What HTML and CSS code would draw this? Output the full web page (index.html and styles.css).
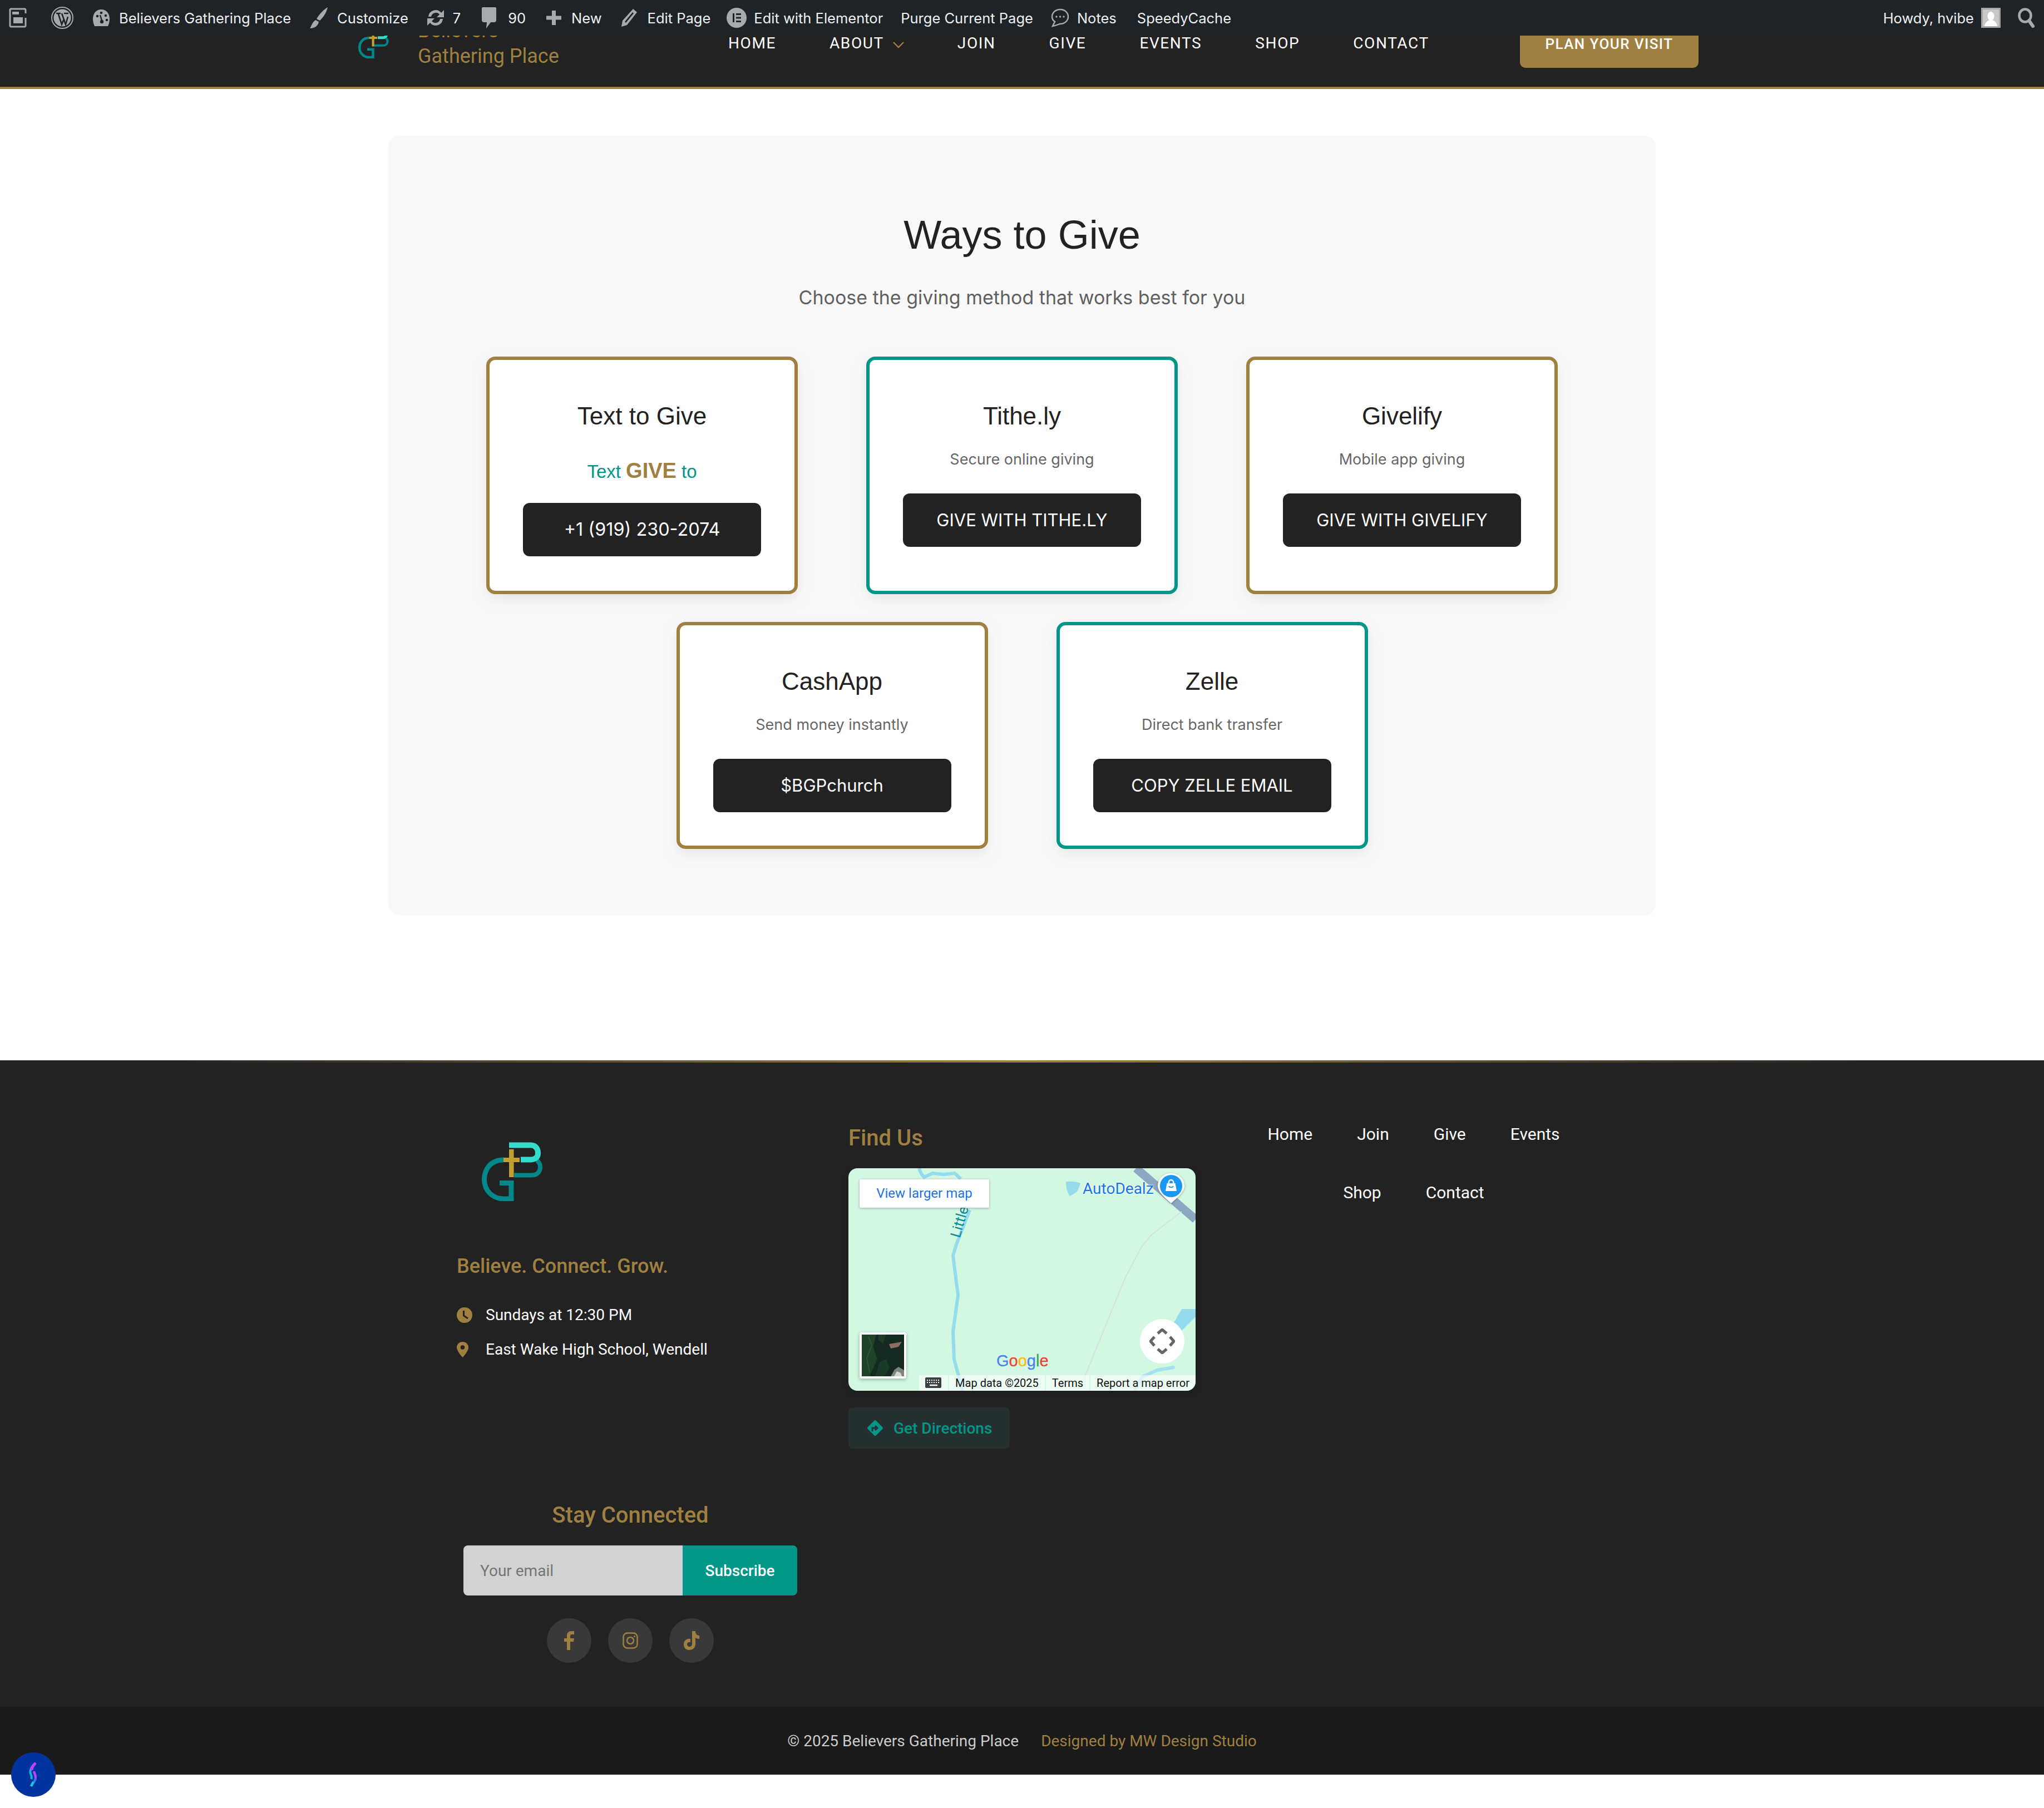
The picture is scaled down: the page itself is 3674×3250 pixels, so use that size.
FILE: index.html
```html
<!DOCTYPE html>
<html lang="en">
<head>
    <meta charset="UTF-8">
    <meta name="viewport" content="width=device-width, initial-scale=1.0">
    <title>Give - Believers Gathering Place</title>
    <link rel="stylesheet" href="styles.css">
</head>
<body>
    <svg class="defs" width="0" height="0">
        <symbol id="bgp-logo" viewBox="0 0 110 106">
            <path d="M39 32C15 32 4.500 50 4.500 67C4.500 88 20 102 40 102H53V73.500H32" fill="none" stroke="#00878a" stroke-width="9"/>
            <path d="M58 59.500H90C102 59.500 105 50 105 45C105 40 103 36 99 33" fill="none" stroke="#00878a" stroke-width="8"/>
            <path d="M49 5.500H88C98 5.500 101 13 101 20C101 27 96 31.500 88 31.500H70" fill="none" stroke="#35dccd" stroke-width="10"/>
            <path d="M49 13H57.500V28H68V36H57.500V63H49V36H39V28H49Z" fill="#c0a030"/>
        </symbol>
    </svg>

    <div class="adminbar">
        <div class="adminbar-left">
            <span class="ab-item ab-first">
                <svg width="32" height="36" viewBox="0 0 32 36"><path d="M30 10V4A2 2 0 0 0 28 2H4A2 2 0 0 0 2 4V32A2 2 0 0 0 4 34H28A2 2 0 0 0 30 32V18" fill="none" stroke="#a7aaad" stroke-width="3"/><rect x="8" y="17" width="17" height="11" fill="#a7aaad"/><rect x="6" y="7" width="12" height="5" fill="#a7aaad"/></svg>
            </span>
            <span class="ab-item ab-wp">
                <svg width="40" height="40" viewBox="0 0 40 40"><circle cx="20" cy="20" r="19" fill="none" stroke="#a7aaad" stroke-width="2"/><circle cx="20" cy="20" r="15.500" fill="#a7aaad"/><path d="M9 12H17M23 12H31M12.500 12L19 32L22.500 23L26 32L30 18M19 12L24 26" fill="none" stroke="#1d2327" stroke-width="2.600"/></svg>
            </span>
            <span class="ab-item ab-site">
                <svg width="32" height="32" viewBox="0 0 32 32"><path d="M16 1C7 1 1 8 1 18C1 22 2 27 4 31H28C30 27 31 22 31 18C31 8 25 1 16 1Z" fill="#a7aaad"/><circle cx="9" cy="13" r="2.300" fill="#1d2327"/><circle cx="16" cy="7" r="2.300" fill="#1d2327"/><circle cx="24" cy="12" r="2.300" fill="#1d2327"/><circle cx="26" cy="20" r="2.300" fill="#1d2327"/><path d="M14 11L17 21" stroke="#1d2327" stroke-width="2.400"/><circle cx="17" cy="23" r="3.200" fill="#1d2327"/></svg>
                Believers Gathering Place
            </span>
            <span class="ab-item ab-customize">
                <svg width="34" height="40" viewBox="0 0 34 40"><path d="M33 1C31 10 26 18 19 25L13 22C18 13 26 5 33 1Z" fill="#a7aaad"/><path d="M11 24L17 27C16 34 10 39 1 39C4 35 5 28 11 24Z" fill="#a7aaad"/></svg>
                Customize
            </span>
            <span class="ab-item ab-updates">
                <svg width="36" height="36" viewBox="0 0 36 36"><path d="M5 16A13 13 0 0 1 28 9L33 4V17H20L25 12A8.500 8.500 0 0 0 10 16ZM31 20A13 13 0 0 1 8 27L3 32V19H16L11 24A8.500 8.500 0 0 0 26 20Z" fill="#a7aaad"/></svg>
                7
            </span>
            <span class="ab-item ab-comments">
                <svg width="28" height="40" viewBox="0 0 28 40"><path d="M3 1H25A2 2 0 0 1 27 3V24A4 4 0 0 1 23 28H17L9 39L10 28H5A4 4 0 0 1 1 24V3A2 2 0 0 1 3 1Z" fill="#a7aaad"/></svg>
                90
            </span>
            <span class="ab-item ab-new">
                <svg width="27" height="26" viewBox="0 0 27 26"><path d="M10 0H17V9.500H27V16.500H17V26H10V16.500H0V9.500H10Z" fill="#a7aaad"/></svg>
                New
            </span>
            <span class="ab-item ab-edit">
                <svg width="30" height="34" viewBox="0 0 30 34"><path d="M22 1L29 7L11 30L1 33L3 22ZM21 7L7 24L9 26L23 9Z" fill="#a7aaad" fill-rule="evenodd"/></svg>
                Edit Page
            </span>
            <span class="ab-item ab-elementor">
                <svg width="36" height="36" viewBox="0 0 36 36"><circle cx="18" cy="18" r="18" fill="#a7aaad"/><path d="M11 10H14V26H11ZM17 10H26V13H17ZM17 16.500H26V19.500H17ZM17 23H26V26H17Z" fill="#1d2327"/></svg>
                Edit with Elementor
            </span>
            <span class="ab-item ab-purge">Purge Current Page</span>
            <span class="ab-item ab-notes">
                <svg width="34" height="34" viewBox="0 0 34 34"><path d="M18 2C9 2 3 8 3 15C3 19 5 22 8 24L4 32C10 31 14 29 17 28C26 28 32 22 32 15C32 8 26 2 18 2Z" fill="none" stroke="#a7aaad" stroke-width="2.500"/><circle cx="11" cy="15" r="1.700" fill="#a7aaad"/><circle cx="17.500" cy="15" r="1.700" fill="#a7aaad"/><circle cx="24" cy="15" r="1.700" fill="#a7aaad"/></svg>
                Notes
            </span>
            <span class="ab-item ab-speedy">SpeedyCache</span>
        </div>
        <div class="adminbar-right">
            <span class="ab-howdy">Howdy, hvibe</span>
            <svg class="ab-avatar" width="35" height="36" viewBox="0 0 35 36"><rect width="35" height="36" fill="#a7a7a7"/><rect x="3" y="3" width="29" height="30" fill="#c8c8c8"/><ellipse cx="17.500" cy="15" rx="6" ry="8" fill="#fff"/><path d="M6 33C7 26 12 22 17.500 22C23 22 28 26 29 33Z" fill="#fff"/></svg>
            <svg class="ab-search" width="31" height="36" viewBox="0 0 31 36"><ellipse cx="13" cy="14" rx="10.500" ry="11.500" fill="none" stroke="#a7aaad" stroke-width="4.500"/><path d="M20 23L27 33" stroke="#a7aaad" stroke-width="6" stroke-linecap="round"/></svg>
        </div>
    </div>

    <header class="site-header">
        <div class="brand">
            <svg class="brand-logo"><use href="#bgp-logo"/></svg>
            <div class="brand-name">Believers<br>Gathering Place</div>
        </div>
        <nav class="main-nav">
            <a>HOME</a>
            <a>ABOUT <svg class="caret" width="20" height="12" viewBox="0 0 20 12"><path d="M1 1L10 10L19 1" fill="none" stroke="#a08040" stroke-width="2.400"/></svg></a>
            <a>JOIN</a>
            <a>GIVE</a>
            <a>EVENTS</a>
            <a>SHOP</a>
            <a>CONTACT</a>
        </nav>
        <a class="visit-btn">PLAN YOUR VISIT</a>
    </header>

    <main class="content">
        <section class="give-panel">
            <h1>Ways to Give</h1>
            <p class="give-sub">Choose the giving method that works best for you</p>
            <div class="give-row give-row-first">
                <div class="give-card gold">
                    <h3>Text to Give</h3>
                    <p class="give-text">Text <strong>GIVE</strong> to</p>
                    <a class="give-btn phone">+1 (919) 230-2074</a>
                </div>
                <div class="give-card teal">
                    <h3>Tithe.ly</h3>
                    <p>Secure online giving</p>
                    <a class="give-btn">GIVE WITH TITHE.LY</a>
                </div>
                <div class="give-card gold">
                    <h3>Givelify</h3>
                    <p>Mobile app giving</p>
                    <a class="give-btn">GIVE WITH GIVELIFY</a>
                </div>
            </div>
            <div class="give-row">
                <div class="give-card gold">
                    <h3>CashApp</h3>
                    <p>Send money instantly</p>
                    <a class="give-btn">$BGPchurch</a>
                </div>
                <div class="give-card teal">
                    <h3>Zelle</h3>
                    <p>Direct bank transfer</p>
                    <a class="give-btn">COPY ZELLE EMAIL</a>
                </div>
            </div>
        </section>
    </main>

    <footer class="site-footer">
        <div class="footer-line"></div>
        <div class="footer-grid">
            <div class="footer-about">
                <svg class="footer-logo"><use href="#bgp-logo"/></svg>
                <h4 class="tagline">Believe. Connect. Grow.</h4>
                <div class="info-line first">
                    <svg width="28" height="28" viewBox="0 0 28 28"><circle cx="14" cy="14" r="14" fill="#a08040"/><path d="M12.500 6V15L20 20" fill="none" stroke="#222" stroke-width="3"/></svg>
                    Sundays at 12:30 PM
                </div>
                <div class="info-line">
                    <svg width="28" height="28" viewBox="0 0 28 28"><path d="M10.500 0C4 0 0 5 0 10C0 17 10.500 28 10.500 28C10.500 28 21 17 21 10C21 5 17 0 10.500 0Z" fill="#a08040"/><circle cx="10.500" cy="10" r="3.800" fill="#222"/></svg>
                    East Wake High School, Wendell
                </div>
            </div>
            <div class="footer-map">
                <h4>Find Us</h4>
                <div class="map">
                    <svg class="map-art" viewBox="0 0 624 400" width="624" height="400">
                        <path d="M127 0L131 10L136 16L151 9L171 11L191 9L202 19" fill="none" stroke="#94dbee" stroke-width="6"/>
                        <path d="M218 75L194 137L188 157L197 228L188 294L190 343L205 400" fill="none" stroke="#94dbee" stroke-width="6"/>
                        <path d="M517 0L624 92" stroke="#8ea6c2" stroke-width="15"/>
                        <path d="M599 78L544 120L527 141L497 198L423 379" fill="none" stroke="#d8dfe4" stroke-width="2"/>
                        <path d="M391 24C400 23 412 24 417 27C415 34 412 40 410 43L398 50C392 42 391 32 391 24Z" fill="#94dbee"/>
                        <path d="M599 253H624V267L599 292L584 279Z" fill="#94dbee"/>
                        <path d="M584 358L555 363L528 375L515 400" fill="none" stroke="#a6e2ee" stroke-width="6" stroke-linecap="round"/>
                    </svg>
                    <span class="map-river">Little F</span>
                    <span class="map-link">View larger map</span>
                    <span class="map-place">AutoDealz</span>
                    <svg class="map-pin" width="48" height="54" viewBox="0 0 48 54"><path d="M24 0C11 0 0 10 0 23C0 34 15 46 24 54C33 46 48 34 48 23C48 10 37 0 24 0Z" fill="#fff"/><circle cx="24" cy="23" r="20" fill="#1a97f5"/><path d="M14 32L16.500 18H31.500L34 32Z" fill="#fff"/><path d="M19.500 18C19.500 10 28.500 10 28.500 18" fill="none" stroke="#fff" stroke-width="2.500"/><path d="M20 23C21 26 27 26 28 23" fill="none" stroke="#1a97f5" stroke-width="1.800"/></svg>
                    <div class="map-thumb">
                        <svg width="76" height="75" viewBox="0 0 76 75"><rect width="76" height="75" fill="#14291f"/><path d="M0 0H26L20 22L28 44L14 75H0Z" fill="#1f4229"/><path d="M30 0H44L38 16L30 10Z" fill="#1c3b28"/><path d="M32 50L44 44L50 60L40 75H24Z" fill="#1a3a28"/><path d="M12 4L18 20L9 42L14 68" fill="none" stroke="#2f5c38" stroke-width="1.500"/><path d="M49 17L72 13L66 22L52 25Z" fill="#8f6c5c"/><path d="M52 75L59 63L66 58L76 64V75Z" fill="#7d8680"/><path d="M58 75L63 66L70 69L72 75Z" fill="#d4d8d0"/></svg>
                    </div>
                    <div class="map-pan">
                        <svg width="46" height="46" viewBox="0 0 46 46"><path d="M15 9L23 2L31 9M15 37L23 44L31 37M9 15L2 23L9 31M37 15L44 23L37 31" fill="none" stroke="#666" stroke-width="5"/></svg>
                    </div>
                    <span class="map-google"><b class="g-blue">G</b><b class="g-red">o</b><b class="g-yellow">o</b><b class="g-blue">g</b><b class="g-green">l</b><b class="g-red">e</b></span>
                    <div class="map-attrib">
                        <span class="attr-key"><svg width="30" height="20" viewBox="0 0 30 20"><rect width="29" height="19" rx="2" fill="#3c4043"/><path d="M3 5H26M3 9H26" stroke="#fff" stroke-width="2" stroke-dasharray="2 2"/><path d="M8 14H22" stroke="#fff" stroke-width="2.500"/></svg></span>
                        <span>Map data ©2025</span>
                        <span>Terms</span>
                        <span>Report a map error</span>
                    </div>
                </div>
                <a class="directions">
                    <svg width="32" height="34" viewBox="0 0 32 34"><rect x="5.500" y="6.500" width="21" height="21" rx="2" transform="rotate(45 16 17)" fill="#009688"/><path d="M11 23V17H19M16 13L20 17L16 21" fill="none" stroke="#253030" stroke-width="3"/></svg>
                    Get Directions
                </a>
            </div>
            <nav class="footer-nav">
                <a>Home</a><a>Join</a><a>Give</a><a>Events</a><a>Shop</a><a>Contact</a>
            </nav>
            <div class="footer-signup">
                <h4>Stay Connected</h4>
                <form class="signup-form">
                    <input type="email" placeholder="Your email">
                    <button type="button">Subscribe</button>
                </form>
                <div class="socials">
                    <a><svg width="18" height="34" viewBox="0 0 18 34"><path d="M5 34V19H0V13H5V8C5 3 8 0 13 0H18V6H14C12 6 11 7 11 9V13H18L17 19H11V34Z" fill="#a08040"/></svg></a>
                    <a><svg width="28" height="30" viewBox="0 0 28 30"><rect x="1.500" y="1.500" width="25" height="27" rx="7" fill="none" stroke="#a08040" stroke-width="2.500"/><circle cx="14" cy="15" r="6" fill="none" stroke="#a08040" stroke-width="2.500"/><circle cx="21.500" cy="7.500" r="1.500" fill="#a08040"/></svg></a>
                    <a><svg width="30" height="34" viewBox="0 0 30 34"><path d="M16 0H22C22 5 25 8 29 8V14C26 14 24 13 22 12V23C22 30 17 34 11 34C5 34 1 30 1 24C1 18 6 13 13 14V20C9 19 7 21 7 24C7 26 9 28 11 28C14 28 16 26 16 23Z" fill="#a08040"/></svg></a>
                </div>
            </div>
        </div>
        <div class="footer-bottom">
            <span>© 2025 Believers Gathering Place</span>
            <a>Designed by MW Design Studio</a>
        </div>
    </footer>

    <a class="float-badge">
        <svg width="26" height="44" viewBox="0 0 26 44">
            <path d="M17 1C9 8 6 14 8 20C9 24 11 26 9 30" fill="none" stroke="#12b5d6" stroke-width="4"/>
            <path d="M17 1C12 6 10 10 10 14" fill="none" stroke="#c040ff" stroke-width="5"/>
            <path d="M14 16C15 22 19 26 16 32C14 36 11 39 9 43" fill="none" stroke="#2f7fe8" stroke-width="4"/>
            <path d="M14 16C15 21 18 24 17 29" fill="none" stroke="#c040ff" stroke-width="4"/>
            <path d="M13 35C11 38 10 40 9 43" fill="none" stroke="#12d0d6" stroke-width="4"/>
        </svg>
    </a>
</body>
</html>
```

FILE: styles.css
```css
* {
    box-sizing: border-box;
}
html, body {
    margin: 0;
    padding: 0;
}
body {
    font-family: "Roboto", sans-serif;
    background: #fff;
    color: #222;
    height: 3250px;
    overflow: hidden;
    position: relative;
}
.defs {
    display: block;
    height: 0;
}

/* admin bar */
.adminbar {
    height: 64px;
    background: #1d2327;
    color: #f0f0f1;
    display: flex;
    justify-content: space-between;
    align-items: center;
    font-family: "Inter", sans-serif;
    font-size: 25.5px;
    white-space: nowrap;
}
.adminbar-left {
    display: flex;
    align-items: center;
}
.adminbar-right {
    display: flex;
    align-items: center;
    padding-right: 16px;
}
.ab-item {
    display: flex;
    align-items: center;
    gap: 16px;
}
.ab-first { margin-left: 16px; }
.ab-wp { margin-left: 44px; }
.ab-site { margin-left: 34px; }
.ab-customize { margin-left: 33px; }
.ab-updates { margin-left: 31px; gap: 13px; }
.ab-comments { margin-left: 37px; gap: 20px; }
.ab-new { margin-left: 37px; gap: 18px; }
.ab-edit { margin-left: 34px; gap: 18px; }
.ab-elementor { margin-left: 29px; gap: 13px; }
.ab-purge { margin-left: 32px; }
.ab-notes { margin-left: 31px; gap: 14px; }
.ab-speedy { margin-left: 37px; }
.ab-avatar { margin-left: 13px; }
.ab-search { margin-left: 31px; }

/* site header, scrolled under the admin bar */
.site-header {
    height: 96px;
    background: #222;
    border-bottom: 4px solid #a08040;
    display: flex;
    align-items: flex-end;
    overflow: hidden;
    padding-left: 644px;
}
.brand {
    display: flex;
    align-items: flex-start;
    gap: 52px;
    width: 665px;
    padding-bottom: 32px;
}
.brand-logo {
    width: 55px;
    height: 53px;
    margin-top: 20px;
}
.brand-name {
    color: #a08040;
    font-size: 36px;
    line-height: 46px;
    white-space: nowrap;
}
.main-nav {
    display: flex;
    align-items: center;
    width: 1423px;
    gap: 96px;
    color: #fff;
    font-size: 28px;
    letter-spacing: 1.6px;
    padding-bottom: 62px;
    white-space: nowrap;
}
.caret {
    margin-left: 8px;
}
.visit-btn {
    width: 321px;
    height: 120px;
    background: #a08040;
    color: #fff;
    border-radius: 0 0 10px 10px;
    font-size: 26px;
    font-weight: 500;
    letter-spacing: 1.4px;
    text-align: center;
    padding-top: 62px;
    margin-bottom: 34px;
    white-space: nowrap;
}

/* ways to give */
.content {
    height: 1746px;
    padding: 84px 698px 0;
}
.give-panel {
    background: #f9f9f9;
    border-radius: 20px;
    height: 1401px;
    padding-top: 133px;
    text-align: center;
    font-family: "Liberation Sans", Arial, sans-serif;
}
.give-panel h1 {
    margin: 0;
    font-size: 72px;
    font-weight: 400;
    line-height: 90px;
    color: #222;
}
.give-sub {
    margin: 44px 0 82px;
    font-family: "Inter", sans-serif;
    font-size: 34px;
    line-height: 48px;
    color: #606060;
}
.give-row {
    display: flex;
    justify-content: center;
    gap: 123px;
    margin-bottom: 50px;
}
.give-card {
    width: 560px;
    height: 408px;
    background: #fff;
    border: 6px solid #a08040;
    border-radius: 16px;
    padding: 73px 60px 0;
    box-shadow: 0 10px 30px rgba(0, 0, 0, 0.08);
}
.give-card.teal {
    border-color: #009688;
}
.give-row-first .give-card {
    height: 427px;
}
.give-card h3 {
    margin: 0;
    font-size: 44px;
    font-weight: 400;
    line-height: 56px;
    color: #222;
}
.give-card p {
    margin: 31px 0 42px;
    font-family: "Inter", sans-serif;
    font-size: 27px;
    line-height: 38px;
    color: #666;
}
.give-card .give-text {
    margin: 47px 0 33px;
    font-family: "Liberation Sans", Arial, sans-serif;
    font-size: 33px;
    line-height: 46px;
    color: #009688;
}
.give-text strong {
    color: #a08040;
    font-size: 38px;
}
.give-btn {
    display: block;
    height: 96px;
    line-height: 96px;
    background: #222;
    color: #fff;
    border-radius: 12px;
    font-family: "Inter", sans-serif;
    font-size: 31px;
}
.give-btn.phone {
    font-size: 32.4px;
}

/* footer */
.site-footer {
    background: #222;
    height: 1284px;
    color: #fff;
    display: flex;
    flex-direction: column;
}
.footer-line {
    height: 4px;
    background: linear-gradient(90deg, transparent 8%, #a08040 50%, transparent 92%);
}
.footer-grid {
    display: grid;
    grid-template-columns: 704px 736px 560px;
    grid-template-rows: 1fr;
    margin-left: 821px;
    height: 1158px;
}
.footer-about {
    grid-column: 1;
    grid-row: 1;
    padding-top: 143px;
}
.footer-logo {
    display: block;
    width: 110px;
    height: 106px;
    margin-left: 45px;
}
.tagline {
    margin: 95px 0 0;
    font-size: 36px;
    font-weight: 500;
    line-height: 44px;
    color: #a08040;
}
.info-line {
    display: flex;
    align-items: center;
    gap: 24px;
    font-size: 28px;
    line-height: 62px;
}
.info-line.first {
    margin-top: 35px;
}
.footer-map {
    grid-column: 2;
    grid-row: 1;
}
.footer-map h4 {
    margin: 0;
    padding-top: 111px;
    font-size: 40px;
    font-weight: 500;
    line-height: 50px;
    color: #a08040;
}
.map {
    position: relative;
    width: 624px;
    height: 400px;
    margin-top: 29px;
    border-radius: 16px;
    overflow: hidden;
    background: #d3f8e2;
    box-shadow: 0 4px 16px rgba(0, 0, 0, 0.2);
}
.map-art {
    display: block;
}
.map-river {
    position: absolute;
    top: 98px;
    left: 206px;
    color: #0a8a9c;
    font-size: 26px;
    transform: rotate(-74deg);
    transform-origin: left bottom;
    white-space: nowrap;
}
.map-link {
    position: absolute;
    left: 20px;
    top: 20px;
    width: 233px;
    height: 51px;
    line-height: 51px;
    background: #fff;
    color: #1a73e8;
    font-size: 24px;
    text-align: center;
    border-radius: 2px;
    box-shadow: 0 1px 4px rgba(0, 0, 0, 0.3);
}
.map-place {
    position: absolute;
    left: 421px;
    top: 19px;
    color: #1a73e8;
    font-size: 28px;
    line-height: 36px;
    text-shadow: 0 0 3px #fff, 0 0 3px #fff;
}
.map-pin {
    position: absolute;
    left: 556px;
    top: 9px;
    filter: drop-shadow(0 1px 2px rgba(0, 0, 0, 0.3));
}
.map-thumb {
    position: absolute;
    left: 20px;
    top: 295px;
    border: 4px solid #fff;
    border-radius: 4px;
    line-height: 0;
    box-shadow: 0 2px 6px rgba(0, 0, 0, 0.3);
}
.map-pan {
    position: absolute;
    left: 524px;
    top: 271px;
    width: 80px;
    height: 80px;
    border-radius: 50%;
    background: #fff;
    display: flex;
    align-items: center;
    justify-content: center;
}
.map-google {
    position: absolute;
    left: 266px;
    top: 330px;
    font-family: "Liberation Sans", Arial, sans-serif;
    font-size: 29px;
    -webkit-text-stroke: 0.4px;
    text-shadow: 0 0 2px #fff;
}
.map-google b { font-weight: 400; }
.g-blue { color: #4285f4; }
.g-red { color: #ea4335; }
.g-yellow { color: #fbbc05; }
.g-green { color: #34a853; }
.map-attrib {
    position: absolute;
    right: 0;
    bottom: 0;
    height: 28px;
    display: flex;
    gap: 2px;
    color: #111;
    font-size: 20px;
    line-height: 29px;
}
.map-attrib span {
    background: rgba(255, 255, 255, 0.6);
    padding: 0 11px;
}
.map-attrib .attr-key {
    display: flex;
    align-items: center;
}
.directions {
    display: inline-flex;
    align-items: center;
    gap: 17px;
    height: 74px;
    width: 290px;
    margin-top: 30px;
    padding-left: 32px;
    background: #253030;
    border-radius: 8px;
    color: #009688;
    font-size: 28px;
    font-weight: 500;
}
.footer-nav {
    grid-column: 3;
    grid-row: 1;
    display: flex;
    flex-wrap: wrap;
    justify-content: center;
    align-content: flex-start;
    gap: 0 80px;
    padding-top: 76px;
    font-size: 30px;
}
.footer-nav a {
    line-height: 105px;
    height: 105px;
}
.footer-signup {
    grid-column: 1;
    grid-row: 1;
    align-self: start;
    margin-top: 789px;
    margin-left: 12px;
    width: 600px;
    text-align: center;
}
.footer-signup h4 {
    margin: 0;
    font-size: 40px;
    font-weight: 500;
    line-height: 50px;
    color: #a08040;
}
.signup-form {
    display: flex;
    margin-top: 29px;
    height: 90px;
}
.signup-form input {
    width: 394px;
    border: 0;
    background: #d1d3d2;
    border-radius: 8px 0 0 8px;
    padding: 0 30px;
    font-family: "Roboto", sans-serif;
    font-size: 28px;
}
.signup-form input::placeholder {
    color: #757575;
}
.signup-form button {
    width: 206px;
    border: 0;
    background: #009688;
    color: #fff;
    border-radius: 0 8px 8px 0;
    font-family: "Roboto", sans-serif;
    font-size: 28px;
    font-weight: 500;
}
.socials {
    display: flex;
    justify-content: center;
    gap: 30px;
    margin-top: 41px;
}
.socials a {
    width: 80px;
    height: 80px;
    border-radius: 50%;
    background: #393939;
    display: flex;
    align-items: center;
    justify-content: center;
}
.footer-bottom {
    height: 122px;
    background: #1a1a1a;
    display: flex;
    justify-content: center;
    align-items: center;
    gap: 40px;
    font-size: 28px;
    color: #ccc;
}
.footer-bottom a {
    color: #a08040;
}

/* floating badge bottom left */
.float-badge {
    position: absolute;
    left: 20px;
    top: 3150px;
    width: 80px;
    height: 80px;
    border-radius: 50%;
    background: #00339e;
    display: flex;
    align-items: center;
    justify-content: center;
}
```
